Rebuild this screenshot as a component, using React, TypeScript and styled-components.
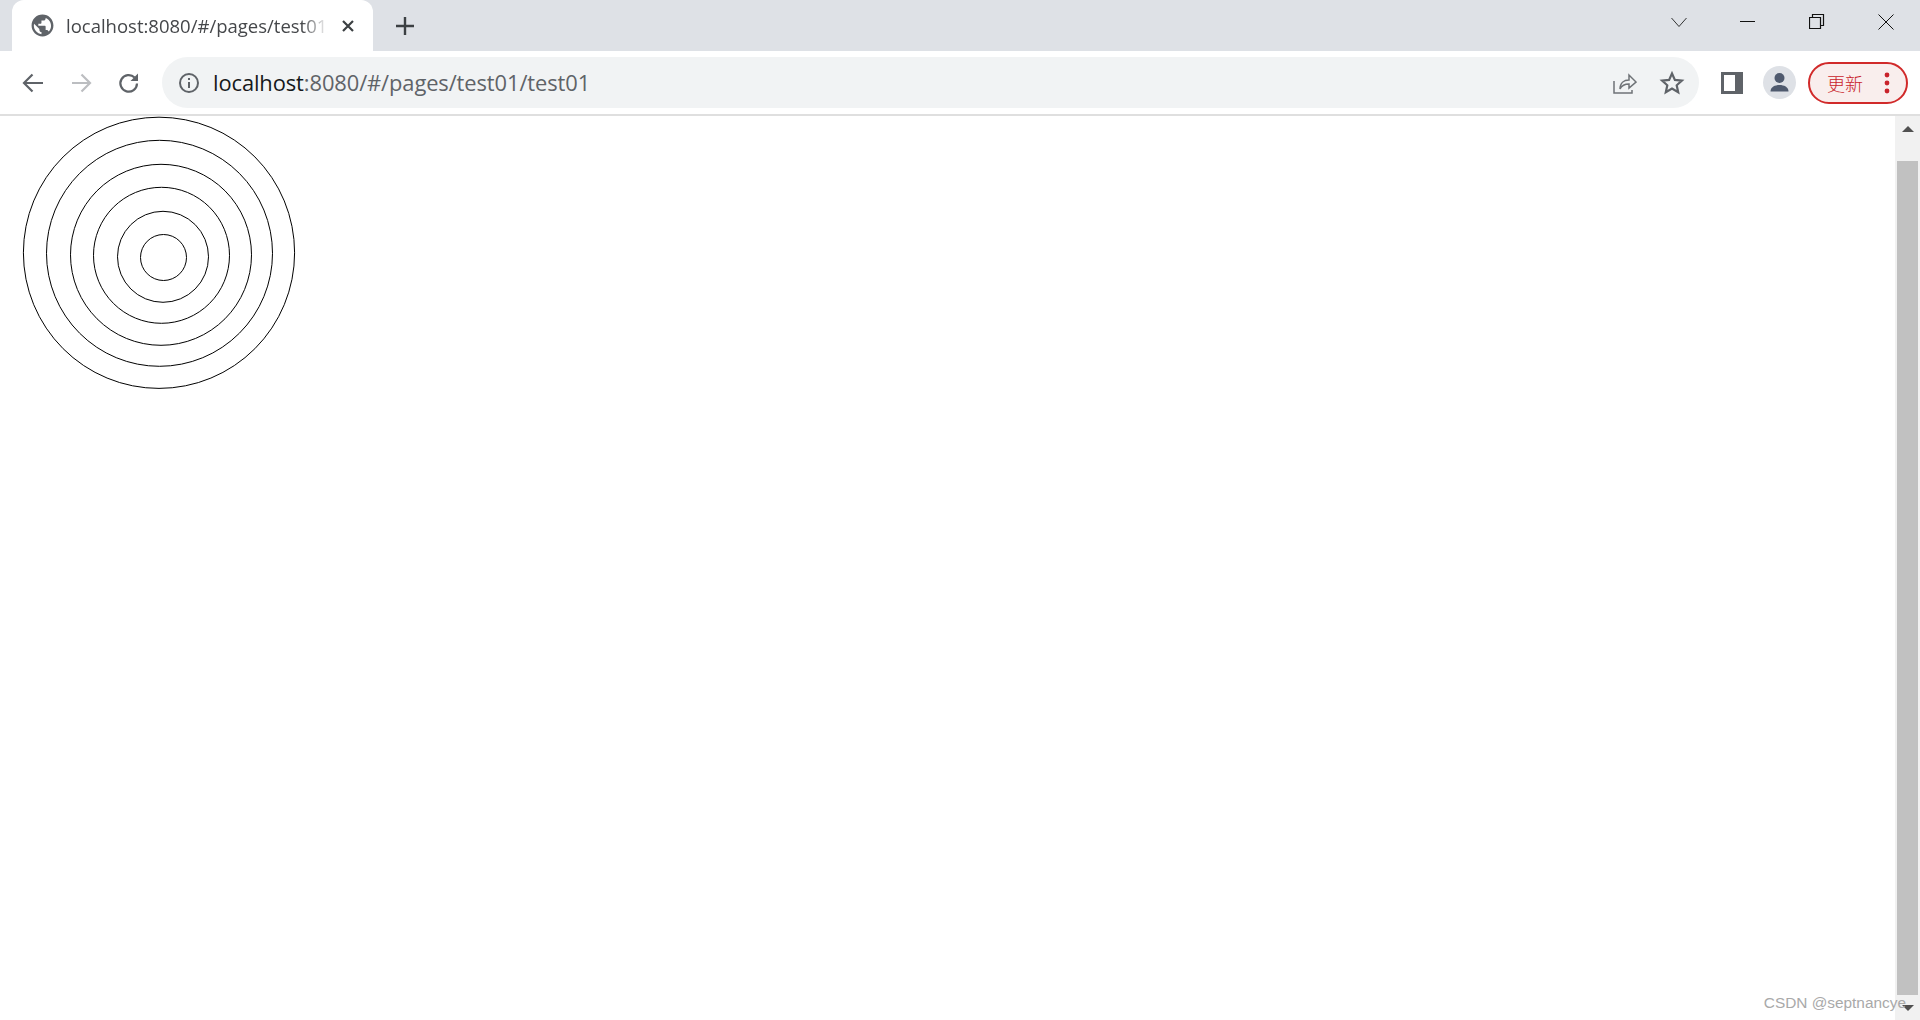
import React from "react";
import styled, { createGlobalStyle } from "styled-components";

const Global = createGlobalStyle`
  html, body { margin: 0; padding: 0; height: 100%; overflow: hidden; background: #fff; }
  #root { height: 100%; }
`;

const Window = styled.div`
  position: relative;
  display: flex;
  flex-direction: column;
  height: 1020px;
  font-family: "Open Sans", "Liberation Sans", sans-serif;
  overflow: hidden;
`;

const TabStrip = styled.header`
  display: flex;
  align-items: stretch;
  height: 51px;
  flex: none;
  padding-left: 12px;
  background: #dee1e6;
`;

const Tab = styled.div`
  position: relative;
  display: flex;
  align-items: center;
  width: 361px;
  padding: 0 18px 0 18px;
  box-sizing: border-box;
  background: #fff;
  border-radius: 12px 12px 0 0;
`;

const TabIcon = styled.svg`
  width: 25px;
  height: 25px;
  flex: none;
  margin-right: 11px;
`;

const TabTitle = styled.span`
  flex: 1;
  min-width: 0;
  overflow: hidden;
  white-space: nowrap;
  font-size: 18.5px;
  color: #45474a;
  -webkit-mask-image: linear-gradient(to right, #000 90%, transparent 100%);
  mask-image: linear-gradient(to right, #000 90%, transparent 100%);
`;

const TabClose = styled.svg`
  width: 14px;
  height: 14px;
  flex: none;
  margin-left: 13px;
`;

const NewTab = styled.svg`
  width: 20px;
  height: 20px;
  flex: none;
  margin: 16px 0 0 22px;
`;

const Spacer = styled.div`
  flex: 1;
`;

const WindowControls = styled.div`
  display: flex;
  align-items: flex-start;
  gap: 53px;
  padding: 14px 26px 0 0;
`;

const ControlIcon = styled.svg`
  width: 16px;
  height: 16px;
  flex: none;
`;

const Toolbar = styled.nav`
  display: flex;
  align-items: center;
  flex: none;
  height: 65px;
  box-sizing: border-box;
  padding: 0 12px 0 21px;
  background: #fff;
  border-bottom: 2px solid #dfdfdf;
`;

const NavIcon = styled.svg`
  width: 24px;
  height: 24px;
  flex: none;
  margin-right: 24px;
`;

const Omnibox = styled.div`
  display: flex;
  align-items: center;
  width: 1538px;
  height: 51px;
  margin-left: -3px;
  box-sizing: border-box;
  padding: 0 14px 0 16px;
  background: #f1f3f4;
  border-radius: 26px;
`;

const InfoIcon = styled.svg`
  width: 22px;
  height: 22px;
  flex: none;
  margin-right: 13px;
`;

const Url = styled.div`
  flex: 1;
  font-size: 21.9px;
  letter-spacing: -0.1px;
  color: #5f6368;
  white-space: nowrap;
`;

const Host = styled.span`
  color: #16181a;
`;

const OmniAction = styled.svg`
  width: 26px;
  height: 26px;
  flex: none;
  margin-left: 22px;
`;

const PanelIcon = styled.svg`
  width: 22px;
  height: 22px;
  flex: none;
  margin-left: 22px;
`;

const Avatar = styled.svg`
  width: 33px;
  height: 33px;
  flex: none;
  margin-left: 20px;
`;

const UpdatePill = styled.div`
  display: flex;
  align-items: center;
  justify-content: space-between;
  width: 100px;
  height: 42px;
  margin-left: 12px;
  box-sizing: border-box;
  padding: 0 16px 0 17px;
  background: #f9eeed;
  border: 2px solid #d12a2a;
  border-radius: 21px;
`;

const UpdateLabel = styled.span`
  font-family: "Noto Sans CJK SC", sans-serif;
  font-size: 18px;
  font-weight: 300;
  color: #c9232b;
`;

const Dots = styled.svg`
  width: 6px;
  height: 24px;
  flex: none;
`;

const Viewport = styled.main`
  display: flex;
  flex: 1;
  min-height: 0;
  background: #fff;
`;

const Canvas = styled.div`
  flex: 1;
`;

const Rings = styled.svg`
  display: block;
  width: 310px;
  height: 290px;
`;

const Scrollbar = styled.aside`
  display: flex;
  flex-direction: column;
  align-items: center;
  width: 25px;
  flex: none;
  background: #f1f1f1;
`;

const ScrollButton = styled.div<{ $h: number; $arrowTop: number }>`
  display: flex;
  justify-content: center;
  align-items: flex-start;
  width: 100%;
  height: ${(p) => p.$h}px;
  box-sizing: border-box;
  padding-top: ${(p) => p.$arrowTop}px;
  flex: none;
`;

const Arrow = styled.svg`
  display: block;
  width: 12px;
  height: 6px;
`;

const Thumb = styled.div`
  flex: 1;
  width: 21px;
  background: #c1c1c1;
`;

const Watermark = styled.div`
  position: absolute;
  right: 14px;
  bottom: 8px;
  font-family: "Liberation Sans", Arial, sans-serif;
  font-size: 15.4px;
  line-height: 18px;
  color: #a9a9a9;
  white-space: nowrap;
`;

const rings = [
  { cx: 159, cy: 136.8, r: 135.6 },
  { cx: 159.5, cy: 137.3, r: 113 },
  { cx: 161, cy: 138.8, r: 90.5 },
  { cx: 161.5, cy: 139.3, r: 68 },
  { cx: 163, cy: 140.8, r: 45.5 },
  { cx: 163.5, cy: 141.5, r: 23 },
];

export default function App() {
  return (
    <Window>
      <Global />
      <TabStrip>
        <Tab>
          <TabIcon viewBox="0 0 24 24">
            <path
              fill="#5f6368"
              d="M12 1.5C6.2 1.5 1.5 6.2 1.5 12S6.2 22.5 12 22.5 22.5 17.8 22.5 12 17.8 1.5 12 1.5zM11 20.3C7 19.8 3.7 16.3 3.7 12c0-.6.1-1.2.2-1.8L9 15.3v1c0 1.1.9 2 2 2v2zm6.9-2.6c-.3-.8-1-1.4-1.9-1.4h-1v-3c0-.6-.4-1-1-1H8v-2h2c.6 0 1-.4 1-1V7.3h2c1.1 0 2-.9 2-2v-.4c3 1.2 5.2 4.1 5.2 7.5 0 2.1-.9 4.1-2.3 5.3z"
            />
          </TabIcon>
          <TabTitle>localhost:8080/#/pages/test01/test01</TabTitle>
          <TabClose viewBox="0 0 14 14">
            <path d="M2 2l10 10M12 2L2 12" stroke="#3c4043" strokeWidth="2.2" fill="none" />
          </TabClose>
        </Tab>
        <NewTab viewBox="0 0 20 20">
          <path d="M10 1v18M1 10h18" stroke="#3c4043" strokeWidth="2.4" fill="none" />
        </NewTab>
        <Spacer />
        <WindowControls>
          <ControlIcon viewBox="0 0 16 16">
            <path d="M.5 4l7.5 8.5L15.5 4" stroke="#333" strokeWidth="1" fill="none" />
          </ControlIcon>
          <ControlIcon viewBox="0 0 16 16">
            <path d="M0 7.5h15" stroke="#111" strokeWidth="1" fill="none" />
          </ControlIcon>
          <ControlIcon viewBox="0 0 16 16">
            <path d="M.5 3.5h11v11H.5zM3.5 3.5V.5h11v11h-3" stroke="#111" strokeWidth="1.2" fill="none" />
          </ControlIcon>
          <ControlIcon viewBox="0 0 16 16">
            <path d="M.5.5l15 15M15.5.5l-15 15" stroke="#111" strokeWidth="1" fill="none" />
          </ControlIcon>
        </WindowControls>
      </TabStrip>

      <Toolbar>
        <NavIcon viewBox="0 0 24 24">
          <path d="M22 12H3M11.5 3.500L3 12l8.500 8.500" stroke="#5f6368" strokeWidth="2.2" fill="none" />
        </NavIcon>
        <NavIcon viewBox="0 0 24 24">
          <path d="M3 12h18M12.5 3.500L21 12l-8.500 8.500" stroke="#bcbec1" strokeWidth="2.2" fill="none" />
        </NavIcon>
        <NavIcon viewBox="0 0 24 24">
          <path d="M20 12.5a8.3 8.3 0 1 1-2.4-6" stroke="#5f6368" strokeWidth="2.2" fill="none" />
          <path d="M21 2.5V10h-7.500z" fill="#5f6368" />
        </NavIcon>
        <Omnibox>
          <InfoIcon viewBox="0 0 22 22">
            <circle cx="11" cy="11" r="9" stroke="#5f6368" strokeWidth="2" fill="none" />
            <path d="M11 10v6M11 6v2" stroke="#5f6368" strokeWidth="2" fill="none" />
          </InfoIcon>
          <Url>
            <Host>localhost</Host>:8080/#/pages/test01/test01
          </Url>
          <OmniAction viewBox="0 0 26 26">
            <path
              d="M3 11v12h18v-3M9 19c0-6 4-9 9-9V5l7 7-7 6v-4c-4 0-7 1-9 5z"
              stroke="#6f7377"
              strokeWidth="1.5"
              fill="none"
            />
          </OmniAction>
          <OmniAction viewBox="0 0 26 26">
            <path
              d="M13 3.5l2.900 6.400 7 .7-5.200 4.700 1.500 6.900-6.200-3.600-6.200 3.600 1.500-6.900-5.200-4.700 7-.7z"
              stroke="#5f6368"
              strokeWidth="2.2"
              fill="none"
            />
          </OmniAction>
        </Omnibox>
        <PanelIcon viewBox="0 0 22 22">
          <path fillRule="evenodd" fill="#5f6368" d="M0 0h22v22H0zM3 3v16h11V3z" />
        </PanelIcon>
        <Avatar viewBox="0 0 33 33">
          <circle cx="16.5" cy="16.5" r="16.5" fill="#dee1e6" />
          <circle cx="16.5" cy="12" r="5" fill="#4f5a6e" />
          <path d="M7.5 25.500c0-4.500 4.500-6.500 9-6.500s9 2 9 6.500z" fill="#4f5a6e" />
        </Avatar>
        <UpdatePill>
          <UpdateLabel>更新</UpdateLabel>
          <Dots viewBox="0 0 6 24">
            <circle cx="3" cy="4" r="2.4" fill="#c9232b" />
            <circle cx="3" cy="12" r="2.4" fill="#c9232b" />
            <circle cx="3" cy="20" r="2.4" fill="#c9232b" />
          </Dots>
        </UpdatePill>
      </Toolbar>

      <Viewport>
        <Canvas>
          <Rings viewBox="0 0 310 290">
            {rings.map((c) => (
              <circle key={c.r} cx={c.cx} cy={c.cy} r={c.r} fill="none" stroke="#000" strokeWidth="1" />
            ))}
          </Rings>
        </Canvas>
        <Scrollbar>
          <ScrollButton $h={45} $arrowTop={10}>
            <Arrow viewBox="0 0 12 6">
              <path d="M6 0l6 6H0z" fill="#505050" />
            </Arrow>
          </ScrollButton>
          <Thumb />
          <ScrollButton $h={25} $arrowTop={10}>
            <Arrow viewBox="0 0 12 6">
              <path d="M0 0h12L6 6z" fill="#505050" />
            </Arrow>
          </ScrollButton>
        </Scrollbar>
      </Viewport>
      <Watermark>CSDN @septnancye</Watermark>
    </Window>
  );
}
